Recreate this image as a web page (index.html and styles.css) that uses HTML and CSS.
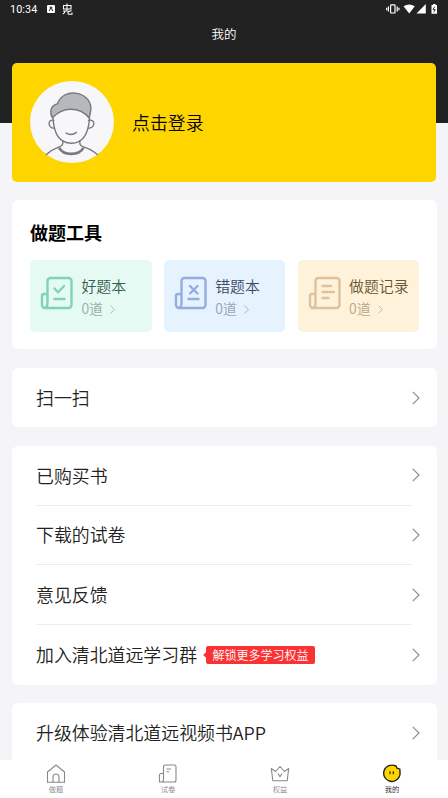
FILE: index.html
```html
<!DOCTYPE html>
<html lang="zh-CN">
<head>
<meta charset="utf-8">
<meta name="viewport" content="width=device-width, initial-scale=1">
<title>我的</title>
<link rel="stylesheet" href="styles.css">
</head>
<body>
<svg width="0" height="0" class="defs">
  <symbol id="chev" viewBox="0 0 8 14"><path d="M.8 .8 7 7 .8 13.2"/></symbol>
  <symbol id="book" viewBox="0 0 34 34"><path d="M7.500 28V5a3 3 0 0 1 3-3h18a3 3 0 0 1 3 3v24a3 3 0 0 1-3 3H5a3 3 0 0 1-3-3V20a2 2 0 0 1 2-2h3.500M7.500 28a4 4 0 0 1-2 3.500"/></symbol>
</svg>
<header class="top">
  <div class="status">
    <div class="left">
      <span class="time">10:34</span>
      <svg class="app" viewBox="0 0 8 8"><rect width="8" height="8" rx="1" fill="#fff"/><path d="M2.200 6 4 2.300 5.800 6M2.700 2.200h2.600" fill="none" stroke="#222" stroke-width="1"/></svg>
      <svg class="bug" viewBox="0 0 11 12"><path d="M5 .5V7.500M1.500 2.500h7.500v3.500h-7.500zM1 8H5M3 8Q3 10 .8 11M6 7.500v2.700q0 1 1 1H10V9.500M9.500 7.500 6 9" fill="none" stroke="#fff" stroke-width="1.100"/></svg>
    </div>
    <svg class="sys" viewBox="0 0 52 12">
      <g fill="none" stroke="#fff" stroke-width="1.200"><rect x="4.600" y="1.800" width="4.400" height="8.200" rx=".6"/><path d="M2.400 3.500v5M.7 4.700v2.600M11.200 3.500v5M12.900 4.700v2.600"/></g>
      <path d="M17.500 3.200Q23 -.4 28.800 3.200L23.200 10.500ZM39.800 1v9.500H30.500ZM45.500 2h1.500V1h2.500v1H51v8.700h-5.500Z" fill="#fff"/>
      <path d="M48.700 3.500 47 6.500h2.200L47.800 9.200" fill="none" stroke="#222" stroke-width=".9"/>
    </svg>
  </div>
  <h1>我的</h1>
</header>
<main>
  <section class="profile">
    <svg class="avatar" viewBox="90 74 251 244" preserveAspectRatio="none">
      <ellipse cx="215.500" cy="196" rx="125.500" ry="122" fill="#f7f7f9"/>
      <g fill="none" stroke="#77797c" stroke-width="4.200" stroke-linecap="round" stroke-linejoin="round">
        <path d="M161 191C143 186 141 214 163 215M265 191C286 186 287 214 263 215"/>
        <path d="M159 184C161 228 174 258 213 259S265 225 268 184"/>
        <path d="M188 252V260Q187 267 177 270Q155 278 139 293M239 252V260Q240 267 250 270Q275 278 291 293"/>
        <path d="M198 229Q213 238 229 227"/>
        <path d="M157 183C148 168 151 146 172 142C181 117 203 108 225 110C260 114 276 140 271 165L267 184C253 167 233 158 211 158C189 158 173 167 157 183Z" fill="#b5b8bc"/>
        <path d="M177 273Q187 291 213 291T250 273" stroke-width="8" stroke-linecap="butt"/>
      </g>
    </svg>
    <span>点击登录</span>
  </section>

  <section class="card tools">
    <h2>做题工具</h2>
    <div class="grid">
      <div class="tool green">
        <svg class="ico"><use href="#book"/><path d="m14.500 12.500 3.500 3.800 6-6.300M14.500 23h10"/></svg>
        <div><b>好题本</b><p>0道<svg class="mini"><use href="#chev"/></svg></p></div>
      </div>
      <div class="tool blue">
        <svg class="ico"><use href="#book"/><path d="m16 10 7.500 7.500m0-7.500L16 17.500M14.500 23h10"/></svg>
        <div><b>错题本</b><p>0道<svg class="mini"><use href="#chev"/></svg></p></div>
      </div>
      <div class="tool sand">
        <svg class="ico"><use href="#book"/><path d="M14.500 10H23M14.500 16H26M14.500 22h6"/></svg>
        <div><b>做题记录</b><p>0道<svg class="mini"><use href="#chev"/></svg></p></div>
      </div>
    </div>
  </section>

  <section class="card list">
    <div class="row"><span>扫一扫</span><svg class="arrow"><use href="#chev"/></svg></div>
  </section>
  <section class="card list">
    <div class="row"><span>已购买书</span><svg class="arrow"><use href="#chev"/></svg></div>
    <div class="row"><span>下载的试卷</span><svg class="arrow"><use href="#chev"/></svg></div>
    <div class="row"><span>意见反馈</span><svg class="arrow"><use href="#chev"/></svg></div>
    <div class="row"><span>加入清北道远学习群</span><em>解锁更多学习权益</em><svg class="arrow"><use href="#chev"/></svg></div>
  </section>
  <section class="card list">
    <div class="row"><span>升级体验清北道远视频书APP</span><svg class="arrow"><use href="#chev"/></svg></div>
  </section>
</main>
<nav>
  <a><svg viewBox="0 0 20 20"><path d="M1.500 8 10 1l8.500 7v10.300h-17zM7 18v-5a3 3 0 0 1 6 0v5"/></svg>做题</a>
  <a><svg viewBox="0 0 20 20"><path d="M5.500 16V3a2 2 0 0 1 2-2H16a2 2 0 0 1 2 2v13a2 2 0 0 1-2 2H1.500v-7a1.500 1.500 0 0 1 1.500-1.500h2.500M5.500 15a3 3 0 0 1-1.500 3M8.500 5H13M8.500 7.800h2.500"/></svg>试卷</a>
  <a><svg viewBox="0 0 20 20"><path d="M1.300 4.500 5.500 7.500 10 2.500l4.500 5 4.200-3-1.500 12.300H2.800zM8 9.500l2 3.300 2-3.300"/></svg>权益</a>
  <a class="on"><svg viewBox="0 0 20 20"><path d="M14 2Q10 .3 6 2A8.200 8.200 0 1 0 17.900 7.500V5.200L15 4.200Z" fill="#ffd500" stroke="#222" stroke-width="1.400"/><path d="M8 7.300v3M11.300 7.300v3" stroke="#222" stroke-width="1.200"/></svg>我的</a>
</nav>
</body>
</html>
```
FILE: styles.css
```css
* { box-sizing: border-box; margin: 0; padding: 0; }
body {
  width: 448px; height: 798px; overflow: hidden;
  display: flex; flex-direction: column;
  background: #f5f5f8; color: #222;
  font-family: "Noto Sans CJK SC", sans-serif; font-weight: 350;
}
.defs { position: absolute; }
svg { display: block; flex: none; }
.top { height: 123px; flex: none; background: #222; color: #fff; }
.status { height: 18px; padding: 0 10px; display: flex; align-items: center; justify-content: space-between; }
.left { display: flex; align-items: center; }
.time { font: 400 10.800px/18px Roboto, sans-serif; letter-spacing: .1px; width: 37px; padding-top: 1px; }
.app { width: 8px; height: 8px; margin-right: 7px; }
.bug { width: 11px; height: 12px; }
.sys { width: 52px; height: 12px; }
h1 { font-size: 12.500px; font-weight: 350; line-height: 18px; margin-top: 7px; text-align: center; }
main { flex: 1; min-height: 0; overflow: hidden; margin-top: -60px; padding: 0 11px 0 12px; display: flex; flex-direction: column; gap: 18.400px; }
.profile {
  height: 119px; flex: none; margin-right: 1px; padding: 0 18px; border-radius: 5px; background: #ffd500; color: #000;
  display: flex; align-items: center; gap: 18px; font-size: 17.900px;
}
.profile span { margin-top: -1px; }
.avatar { width: 84px; height: 82px; margin-top: -2px; }
.card { flex: none; background: #fff; border-radius: 6px; }
.tools { height: 149px; padding: 19px 18px 0; }
h2 { font-size: 18px; line-height: 27px; font-weight: 700; color: #000; }
.grid { display: grid; grid-template-columns: repeat(3, 121.500px); gap: 12.300px; margin-top: 14px; }
.tool { height: 72px; border-radius: 5px; display: flex; padding: 15px 0 0 10px; gap: 7.400px; }
.tool b { display: block; font-size: 14.900px; font-weight: 350; line-height: 22px; white-space: nowrap; }
.tool p { display: flex; align-items: center; font-size: 14px; line-height: 22px; opacity: .48; }
.ico { width: 34px; height: 34px; margin-top: 1px; fill: none; stroke-width: 2.400; stroke-linecap: round; stroke-linejoin: round; }
.mini { width: 5px; height: 9px; margin: 2px 0 0 7px; fill: none; stroke: currentColor; stroke-width: 1.200; }
.green { background: #e4faf3; color: #385c50; }
.green .ico { stroke: #82d2b7; }
.blue { background: #e7f2ff; color: #3c4964; }
.blue .ico { stroke: #92ade0; }
.sand { background: #fff2da; color: #6a5330; }
.sand .ico { stroke: #dfc29b; }
.row { height: 59.700px; margin: 0 25px 0 24px; display: flex; align-items: center; font-size: 17.900px; }
.row:not(:last-child) { border-bottom: 1px solid #ececee; }
.row > span { white-space: nowrap; margin-top: -1px; }
.arrow { width: 8px; height: 14px; margin-left: auto; margin-right: -8px; fill: none; stroke: #888; stroke-width: 1.100; }
em {
  position: relative; margin-left: 9px; padding: 0 6.500px; height: 18px; border-radius: 2px;
  background: #fb3234; color: #fff; font-style: normal; font-size: 12px; line-height: 18px; white-space: nowrap;
}
em::before { content: ""; position: absolute; left: -2px; top: 7px; width: 4px; height: 4px; background: #fb3234; transform: rotate(45deg); }
nav { height: 38px; flex: none; background: #fff; display: grid; grid-template-columns: repeat(4, 1fr); }
nav a { display: flex; flex-direction: column; align-items: center; padding-top: 4px; font-size: 7.300px; line-height: 10px; color: #888; }
nav svg { width: 20px; height: 20px; fill: none; stroke: #888; stroke-width: 1.100; stroke-linejoin: round; }
nav .on { color: #222; }
```
